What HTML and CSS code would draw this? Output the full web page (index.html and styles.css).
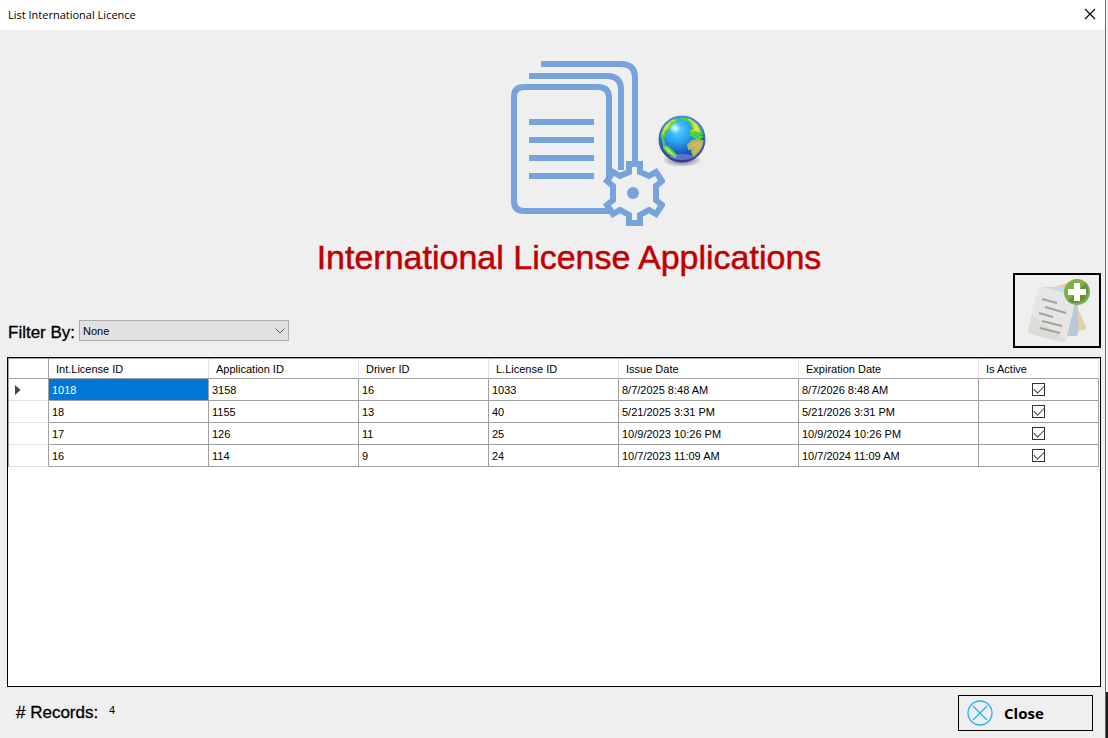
FILE: index.html
```html
<!DOCTYPE html>
<html lang="en">
<head>
<meta charset="utf-8">
<title>List International Licence</title>
<link rel="stylesheet" href="styles.css">
</head>
<body>
<div class="window">
  <header class="titlebar">
    <span>List International Licence</span>
    <button class="titlebar-close" type="button" aria-label="Close window">
      <svg width="12" height="12" viewBox="0 0 12 12"><path d="M1 1l10 10M11 1L1 11" stroke="#000" stroke-width="1.1" fill="none"/></svg>
    </button>
  </header>
  <main class="content">
    <div class="hero">
      <svg class="docs" width="154" height="168" viewBox="0 0 154 168" fill="none" stroke="#76a3dc" stroke-width="6">
        <path d="M30 5h80q14 0 14 14v90M18 17h78q14 0 14 14v80"/>
        <path d="M98 120V39q0-11-11-11H13Q3 28 3 38v104q0 10 10 10h90"/>
        <path d="M18 63h65M18 81h65M18 99h65M18 117h65"/>
        <path fill="#efefef" stroke-width="6" d="M118 105h11v8l9 4 7-4 6 9-6 5v14l6 5-6 9-7-4-9 5v8h-11v-8l-9-5-7 4-6-9 6-5v-14l-6-5 6-9 7 4 9-4z"/>
        <circle cx="122" cy="134" r="6" fill="#76a3dc" stroke="none"/>
      </svg>
      <svg class="globe" width="50" height="56" viewBox="0 0 50 56">
        <defs>
          <radialGradient id="sea" cx=".4" cy=".3" r=".75"><stop offset="0" stop-color="#55d5ff"/><stop offset=".35" stop-color="#2da3f1"/><stop offset=".7" stop-color="#1b57bd"/><stop offset="1" stop-color="#2d2b8d"/></radialGradient>
          <radialGradient id="shade"><stop offset="0" stop-color="#333" stop-opacity=".8"/><stop offset="1" stop-color="#333" stop-opacity="0"/></radialGradient>
          <radialGradient id="glint"><stop offset="0" stop-color="#fff"/><stop offset="1" stop-color="#bff" stop-opacity="0"/></radialGradient>
          <linearGradient id="rim" x1="0" y1="0" x2="0" y2="1"><stop offset="0" stop-color="#4f8ae6"/><stop offset="1" stop-color="#39369b"/></linearGradient>
          <clipPath id="ball"><circle cx="25" cy="25" r="23"/></clipPath>
        </defs>
        <ellipse cx="25" cy="46" rx="20" ry="7" fill="url(#shade)"/>
        <circle cx="25" cy="25" r="23" fill="url(#sea)"/>
        <g clip-path="url(#ball)" stroke="#4fd638" stroke-width="2">
          <path d="M4 21l3-10 7-6 6-1-1 4-4 1-3 6-3 2-2 5z" fill="#d9db42"/>
          <path d="M23 4l10 0 8 6 4 10-7-2-4 1-1-2 3-2-2-6-4-3z" fill="#ead948"/>
          <path d="M34 21l3-2 8 4-4 2z" fill="#38b8a0"/>
          <path d="M31 31l4-4 5-1 7 1-1 7-6 5-3 3-2-4 1-4-4 1z" fill="#c9b760" stroke="#a6b85a"/>
          <path d="M7 31l5 3 7 7-1 2-7-4-4-5z" fill="#dfd96a"/>
          <path d="M5 21l2 9" fill="none"/>
        </g>
        <ellipse cx="25" cy="43" rx="13" ry="3" fill="#9ba2e6" opacity=".5"/>
        <circle cx="18" cy="14" r="6" fill="url(#glint)"/>
        <circle cx="25" cy="25" r="22.500" fill="none" stroke="url(#rim)" stroke-width="2"/>
      </svg>
    </div>
    <h1 class="heading">International License Applications</h1>
    <div class="toolbar">
      <div class="filter">
        <label for="filter">Filter By:</label>
        <div class="select-box">
          <select id="filter"><option>None</option></select>
          <svg class="chevron" width="10" height="6" viewBox="0 0 10 6"><path d="M.5.5L5 5 9.500.5" fill="none" stroke="#555"/></svg>
        </div>
      </div>
      <button class="add" type="button" aria-label="Add application">
        <svg width="66" height="68" viewBox="0 0 66 68">
          <path d="M27 10l13-4 19 44q1 2-2 3l-27 7z" fill="#e1d0ab"/>
          <path d="M17 10h34v47q0 2-2 2H30z" fill="#b5c9dc"/>
          <path d="M17 10h28l-4 8z" fill="#c4dbef"/>
          <path d="M16 10l31 8q3 1 2 4L39 63q-1 3-4 2L4 57q-3-1-3-4L11 13q1-4 5-3z" fill="#e6e5e3"/>
          <path d="M5 38l34 25q-1 3-4 2L4 57q-3-1-3-4z" fill="#dddcd9"/>
          <path d="M15 22l15 4M18 30l21 6M12 36l14 4M15 44l20 5M13 51l20 5" stroke="#a3a3a1" stroke-width="2"/>
          <circle cx="50" cy="15" r="13" fill="#7cb04a"/>
          <path d="M59 6a13 13 0 0 1-18 18z" fill="#67903e"/>
          <path d="M47 6h6v6h6v6h-6v6h-6v-6h-6v-6h6z" fill="#fff"/>
        </svg>
      </button>
    </div>
    <div class="grid-box">
      <table class="grid">
        <colgroup><col class="c-row"><col class="c-int"><col class="c-app"><col class="c-id"><col class="c-id"><col class="c-date"><col class="c-date"><col class="c-active"></colgroup>
        <thead>
          <tr><th></th><th>Int.License ID</th><th>Application ID</th><th>Driver ID</th><th>L.License ID</th><th>Issue Date</th><th>Expiration Date</th><th>Is Active</th></tr>
        </thead>
        <tbody>
          <tr><td class="rowhead"><svg width="6" height="10" viewBox="0 0 6 10"><path d="M0 0l5.500 5L0 10z" fill="#444"/></svg></td><td class="selected">1018</td><td>3158</td><td>16</td><td>1033</td><td>8/7/2025 8:48 AM</td><td>8/7/2026 8:48 AM</td><td class="check"><input type="checkbox" checked aria-label="Is Active 1018"></td></tr>
          <tr><td class="rowhead"></td><td>18</td><td>1155</td><td>13</td><td>40</td><td>5/21/2025 3:31 PM</td><td>5/21/2026 3:31 PM</td><td class="check"><input type="checkbox" checked aria-label="Is Active 18"></td></tr>
          <tr><td class="rowhead"></td><td>17</td><td>126</td><td>11</td><td>25</td><td>10/9/2023 10:26 PM</td><td>10/9/2024 10:26 PM</td><td class="check"><input type="checkbox" checked aria-label="Is Active 17"></td></tr>
          <tr><td class="rowhead"></td><td>16</td><td>114</td><td>9</td><td>24</td><td>10/7/2023 11:09 AM</td><td>10/7/2024 11:09 AM</td><td class="check"><input type="checkbox" checked aria-label="Is Active 16"></td></tr>
        </tbody>
      </table>
    </div>
    <footer class="footer">
      <p class="records"># Records: <span class="count">4</span></p>
      <button class="close" type="button">
        <svg width="26" height="26" viewBox="0 0 26 26" fill="none" stroke="#25b1f0" stroke-width="1.300"><circle cx="13" cy="13" r="12"/><path d="M6 6l14 14M20 6L6 20"/></svg>
        <span>Close</span>
      </button>
    </footer>
  </main>
</div>
<div class="edge"></div>
</body>
</html>
```
FILE: styles.css
```css
* { box-sizing: border-box; }
body {
  margin: 0;
  min-height: 100vh;
  display: flex;
  background: #efefef;
  color: #000;
  font-family: "Liberation Sans", Arial, sans-serif;
  font-size: 11px;
}
button { font: inherit; color: inherit; cursor: pointer; }
svg { display: block; }
.window {
  flex: 1;
  display: flex;
  flex-direction: column;
  border-right: 1px solid #6b6b6b;
}
.edge {
  width: 2px;
  background: linear-gradient(to top, #1d1d1d 46px, #f3f5f7 46px);
}
.titlebar {
  height: 30px;
  display: flex;
  align-items: center;
  justify-content: space-between;
  padding: 0 9px 2px 8px;
  background: #fff;
  font-family: "Open Sans", sans-serif;
  font-size: 11px;
}
.titlebar-close { padding: 0; border: 0; background: none; }
.content {
  flex: 1;
  display: flex;
  flex-direction: column;
  padding: 0 4px 0 7px;
}
.hero {
  display: flex;
  justify-content: center;
  align-items: center;
  padding: 29px 0 0 110px;
}
.globe { margin: 0 0 2px -8px; }
.heading {
  margin: 12px 0 0;
  padding-left: 30px;
  text-align: center;
  color: #c00000;
  font-size: 34px;
  font-weight: 400;
  line-height: 36px;
  -webkit-text-stroke: 0.5px #c00000;
}
.toolbar {
  display: flex;
  justify-content: space-between;
  align-items: flex-end;
  margin-top: -2px;
  padding-bottom: 9px;
}
.filter { display: flex; align-items: flex-end; gap: 4px; padding: 0 0 7px 1px; }
.filter label { font-size: 17px; line-height: 16px; -webkit-text-stroke: 0.3px #000; }
.select-box { position: relative; }
.filter select {
  appearance: none;
  display: block;
  width: 210px;
  height: 21px;
  padding: 0 20px 0 3px;
  border: 1px solid #adadad;
  border-radius: 0;
  background: #e1e1e1;
  color: #000;
  font: inherit;
}
.chevron { position: absolute; right: 4px; top: 8px; pointer-events: none; }
.add {
  width: 88px;
  height: 75px;
  padding: 0 0 0 12px;
  border: 2px solid #000;
  background: #efefef;
}
.grid-box {
  flex: 1;
  border: 1px solid #000;
  background: #fff;
  padding-right: 1px;
}
.grid {
  width: 100%;
  table-layout: fixed;
  border-collapse: separate;
  border-spacing: 0;
  border-top: 1px solid #a0a0a0;
  border-left: 1px solid #a0a0a0;
}
.c-row { width: 40px; }
.c-int { width: 160px; }
.c-app { width: 150px; }
.c-id { width: 130px; }
.c-date { width: 180px; }
.grid th, .grid td {
  height: 22px;
  padding: 0 3px;
  border-right: 1px solid #a0a0a0;
  border-bottom: 1px solid #a0a0a0;
  text-align: left;
  font-weight: 400;
  line-height: 14px;
  white-space: nowrap;
}
.grid th { height: 20px; padding-left: 7px; border-right-color: #e2e2e2; }
.grid th:first-child { border-right-color: #a0a0a0; }
.grid .rowhead { padding-left: 6px; border-bottom-color: #e2e2e2; }
.grid .selected { background: #0078d7; color: #fff; }
.grid .check { text-align: center; }
.check input {
  appearance: none;
  display: block;
  width: 13px;
  height: 13px;
  margin: 0 auto;
  border: 1px solid #333;
  background: #fff;
}
.check input:checked::before {
  content: "";
  display: block;
  width: 9px;
  height: 5px;
  margin: 2px 0 0 1px;
  border: solid #444;
  border-width: 0 0 1px 1px;
  transform: translateY(-1px) rotate(-45deg);
}
.footer {
  display: flex;
  justify-content: space-between;
  align-items: flex-start;
  padding: 8px 8px 7px;
}
.records { margin: 8px 0 0 1px; font-size: 17px; line-height: 20px; -webkit-text-stroke: 0.3px #000; }
.count { font-size: 11px; vertical-align: 4px; margin-left: 6px; line-height: 10px; -webkit-text-stroke: 0; }
.close {
  display: flex;
  align-items: center;
  gap: 11px;
  width: 135px;
  height: 36px;
  padding: 0 8px;
  border: 1px solid #000;
  background: #efefef;
  font-family: "Open Sans", sans-serif;
  font-size: 15px;
  font-weight: 700;
}
```
